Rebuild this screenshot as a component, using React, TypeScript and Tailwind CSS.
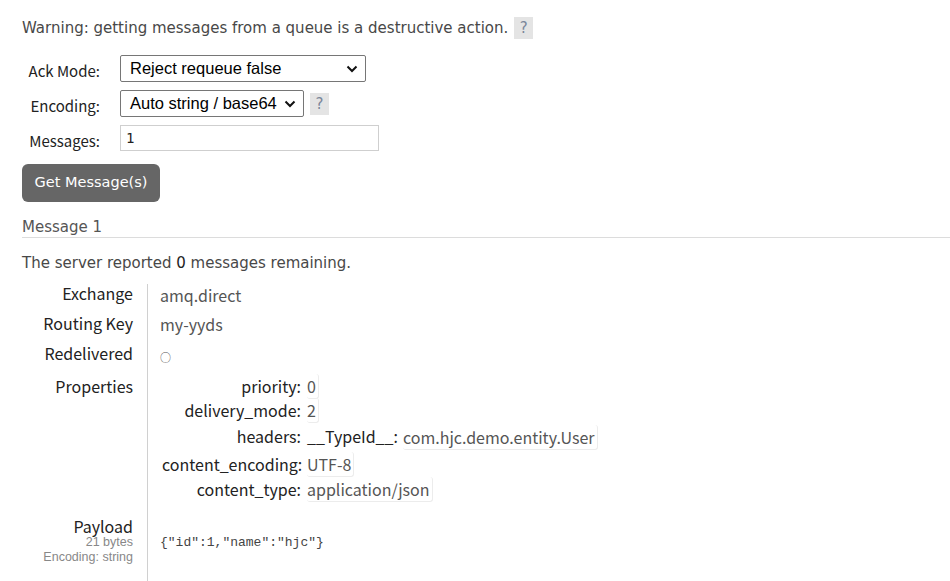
import React from "react";

const V = { fontFamily: '"DejaVu Sans", Verdana, sans-serif' };
const Y = { fontFamily: '"Noto Sans CJK SC", "Noto Sans", sans-serif' };

function Help({ className = "" }: { className?: string }) {
  return (
    <span
      className={`inline-flex h-[22px] w-[19px] items-center justify-center bg-[#e4e4e4] text-[15px] text-[#7a869a] ${className}`}
      style={V}
    >
      ?
    </span>
  );
}

function Val({ children }: { children: React.ReactNode }) {
  return (
    <span className="rounded-[3px] border-b border-r border-[#ececec] pr-[2px] text-[#555]">{children}</span>
  );
}

export default function App() {
  const props: [string, React.ReactNode, string][] = [
    ["priority:", <Val>0</Val>, "h-[24px] pt-[0px]"],
    ["delivery_mode:", <Val>2</Val>, "h-[25px] pt-[0px]"],
    [
      "headers:",
      <span className="flex items-start gap-[5px]">
        <span className="text-[#222]">__TypeId__:</span>
        <span className="pt-[1px]">
          <Val>com.hjc.demo.entity.User</Val>
        </span>
      </span>,
      "h-[28px] pt-[1px]",
    ],
    ["content_encoding:", <Val>UTF-8</Val>, "h-[25px] pt-[1px]"],
    ["content_type:", <Val>application/json</Val>, "h-[25px] pt-[1px]"],
  ];

  return (
    <div className="min-h-[581px] w-[950px] overflow-hidden bg-white pl-[22px] pt-[17px]">
      <div className="flex h-[22px] items-center text-[15px] leading-[22px] text-[#484848]" style={V}>
        <span>Warning: getting messages from a queue is a destructive action.</span>
        <Help className="ml-[6px]" />
      </div>

      <div className="mt-[16px] flex flex-col gap-[8px]" style={Y}>
        <div className="flex items-start">
          <div className="w-[78px] pt-[7px] text-right text-[15px] leading-[18px] text-[#222]">Ack Mode:</div>
          <div className="ml-[20px] flex h-[27px] w-[246px] items-center justify-between rounded-[2px] border border-[#767676] pl-[9px] pr-[7px]">
            <span className="text-[16.5px] text-black" style={{ fontFamily: '"Liberation Sans", Arial, sans-serif' }}>
              Reject requeue false
            </span>
            <svg width="12" height="8" viewBox="0 0 12 8">
              <path d="M1.5 1.5 L6 6 L10.5 1.5" fill="none" stroke="#111" strokeWidth="2" />
            </svg>
          </div>
        </div>
        <div className="flex items-start">
          <div className="w-[78px] pt-[7px] text-right text-[15px] leading-[18px] text-[#222]">Encoding:</div>
          <div className="ml-[20px] flex h-[27px] w-[184px] items-center justify-between rounded-[2px] border border-[#767676] pl-[9px] pr-[7px]">
            <span className="text-[16.5px] text-black" style={{ fontFamily: '"Liberation Sans", Arial, sans-serif' }}>
              Auto string / base64
            </span>
            <svg width="12" height="8" viewBox="0 0 12 8">
              <path d="M1.5 1.5 L6 6 L10.5 1.5" fill="none" stroke="#111" strokeWidth="2" />
            </svg>
          </div>
          <Help className="ml-[6px] mt-[3px]" />
        </div>
        <div className="flex items-start">
          <div className="w-[78px] pt-[7px] text-right text-[15px] leading-[18px] text-[#222]">Messages:</div>
          <div className="ml-[20px] flex h-[26px] w-[259px] items-center border border-[#cfcfcf] pl-[5px]">
            <span className="text-[14px] text-[#222]" style={{ fontFamily: '"DejaVu Sans Mono", monospace' }}>1</span>
          </div>
        </div>
      </div>

      <button
        className="mt-[13px] flex h-[38px] w-[138px] items-center justify-center rounded-[6px] bg-[#666] text-[14.5px] text-white"
        style={V}
      >
        Get Message(s)
      </button>

      <div className="mt-[15px] border-b border-[#dcdcdc] text-[15px] leading-[20px] text-[#555]" style={V}>
        Message 1
      </div>

      <div className="mt-[15px] text-[15px] leading-[20px] text-[#484848]" style={V}>
        The server reported <span className="text-[#222]">0</span> messages remaining.
      </div>

      <div className="mt-[11px] text-[16px] leading-[18px]" style={Y}>
        <div className="flex h-[30px]">
          <div className="w-[111px] text-right text-[#222]">Exchange</div>
          <div className="ml-[14px] border-l border-[#d0d0d0] pl-[12px] pt-[2px] text-[#555]">amq.direct</div>
        </div>
        <div className="flex h-[30px]">
          <div className="w-[111px] text-right text-[#222]">Routing Key</div>
          <div className="ml-[14px] border-l border-[#d0d0d0] pl-[12px] pt-[1px] text-[#555]">my-yyds</div>
        </div>
        <div className="flex h-[33px]">
          <div className="w-[111px] text-right text-[#222]">Redelivered</div>
          <div className="ml-[14px] border-l border-[#d0d0d0] pl-[12px] pt-[4px] text-[11px] text-[#555]">○</div>
        </div>
        <div className="flex h-[140px]">
          <div className="w-[111px] text-right text-[#222]">Properties</div>
          <div className="ml-[14px] border-l border-[#d0d0d0] pl-[14px] pt-[0px]">
            {props.map(([k, v, cls]) => (
              <div key={k} className={`flex ${cls}`}>
                <div className="w-[139px] text-right text-[#222]">{k}</div>
                <div className="ml-[6px]">{v}</div>
              </div>
            ))}
          </div>
        </div>
        <div className="flex h-[80px]">
          <div className="w-[111px] text-right">
            <div className="text-[#222]">Payload</div>
            <div
              className="flex flex-col gap-[1px] text-[12.5px] leading-[14px] text-[#888]"
              style={{ fontFamily: '"Liberation Sans", Arial, sans-serif' }}
            >
              <span className="block h-[14px]">21 bytes</span>
              <span className="block h-[14px]">Encoding: string</span>
            </div>
          </div>
          <div
            className="ml-[14px] border-l border-[#d0d0d0] pl-[12px] pt-[17px] text-[13px] text-[#444]"
            style={{ fontFamily: '"Liberation Mono", monospace' }}
          >
            {'{"id":1,"name":"hjc"}'}
          </div>
        </div>
      </div>
    </div>
  );
}
